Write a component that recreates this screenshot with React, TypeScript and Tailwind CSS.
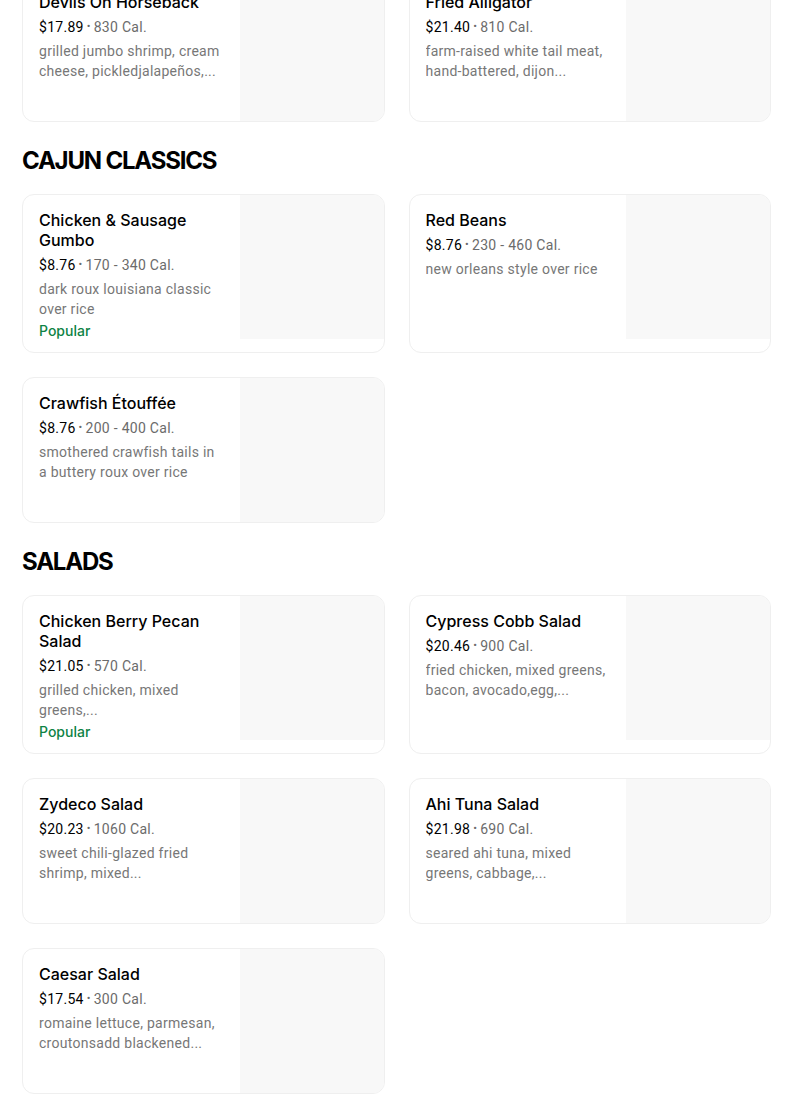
import React from 'react';

type Item = {
  name: string;
  price: string;
  cal: string;
  desc: string;
  popular?: boolean;
};

type Section = {
  title?: string;
  items: Item[];
};

const sections: Section[] = [
  {
    items: [
      {
        name: 'Devils On Horseback',
        price: '$17.89',
        cal: '830 Cal.',
        desc: 'grilled jumbo shrimp, cream cheese, pickledjalapeños,...',
      },
      {
        name: 'Fried Alligator',
        price: '$21.40',
        cal: '810 Cal.',
        desc: 'farm-raised white tail meat, hand-battered, dijon...',
      },
    ],
  },
  {
    title: 'CAJUN CLASSICS',
    items: [
      {
        name: 'Chicken & Sausage Gumbo',
        price: '$8.76',
        cal: '170 - 340 Cal.',
        desc: 'dark roux louisiana classic over rice',
        popular: true,
      },
      {
        name: 'Red Beans',
        price: '$8.76',
        cal: '230 - 460 Cal.',
        desc: 'new orleans style over rice',
      },
      {
        name: 'Crawfish Étouffée',
        price: '$8.76',
        cal: '200 - 400 Cal.',
        desc: 'smothered crawfish tails in a buttery roux over rice',
      },
    ],
  },
  {
    title: 'SALADS',
    items: [
      {
        name: 'Chicken Berry Pecan Salad',
        price: '$21.05',
        cal: '570 Cal.',
        desc: 'grilled chicken, mixed greens,...',
        popular: true,
      },
      {
        name: 'Cypress Cobb Salad',
        price: '$20.46',
        cal: '900 Cal.',
        desc: 'fried chicken, mixed greens, bacon, avocado,egg,...',
      },
      {
        name: 'Zydeco Salad',
        price: '$20.23',
        cal: '1060 Cal.',
        desc: 'sweet chili-glazed fried shrimp, mixed...',
      },
      {
        name: 'Ahi Tuna Salad',
        price: '$21.98',
        cal: '690 Cal.',
        desc: 'seared ahi tuna, mixed greens, cabbage,...',
      },
      {
        name: 'Caesar Salad',
        price: '$17.54',
        cal: '300 Cal.',
        desc: 'romaine lettuce, parmesan, croutonsadd blackened...',
      },
    ],
  },
];

const MenuCard: React.FC<{ item: Item }> = ({ item }) => (
  <div className="flex overflow-hidden rounded-xl border border-[#efefef] bg-white">
    <div className="min-w-0 flex-1 px-4 pt-[15px] pb-[11px]">
      <div className="font-['Inter',sans-serif] text-base font-medium leading-5 text-black">
        {item.name}
      </div>
      <div className="mt-[5px] flex items-center text-sm leading-5 tracking-[0.02em]">
        <span className="text-black">{item.price}</span>
        <span className="mx-[3px] text-[11px] text-[#6b6b6b]">•</span>
        <span className="text-[#6b6b6b]">{item.cal}</span>
      </div>
      <div className="mt-1 line-clamp-2 text-sm leading-5 tracking-[0.02em] text-[#777777]">
        {item.desc}
      </div>
      {item.popular && (
        <div className="mt-[2px] font-['Inter',sans-serif] text-sm font-medium leading-5 text-[#0e8345]">
          Popular
        </div>
      )}
    </div>
    <div className="h-[144px] w-[144px] shrink-0 bg-[#f8f8f8]" />
  </div>
);

export default function App() {
  return (
    <div
      className="min-h-screen overflow-hidden bg-white pl-[22px] pr-[33px]"
      style={{ fontFamily: 'Roboto, "Noto Sans", sans-serif' }}
    >
      <div className="-mt-[24px]">
        {sections.map((section, i) => (
          <div key={i}>
            {section.title && (
              <h2 className="pt-[23px] pb-[17px] font-['Inter',sans-serif] text-[24px] font-bold leading-8 tracking-[-0.05em] text-black">
                {section.title}
              </h2>
            )}
            <div className="grid grid-cols-2 gap-6">
              {section.items.map(item => (
                <MenuCard key={item.name} item={item} />
              ))}
            </div>
          </div>
        ))}
      </div>
    </div>
  );
}
